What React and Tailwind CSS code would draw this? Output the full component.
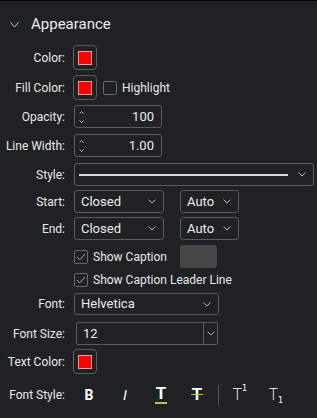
import React from 'react';

const font = { fontFamily: 'Roboto, "Noto Sans", sans-serif' };

function Chevron({ className = '' }) {
  return (
    <svg className={className} width="8" height="5" viewBox="0 0 8 5" fill="none">
      <path d="M0.5 0.5L4 4L7.5 0.5" stroke="#bdbdbd" strokeWidth="1" />
    </svg>
  );
}

function Label({ children }) {
  return <div className="w-[66px] shrink-0 text-right text-[12px] text-[#e8e8e8] pr-[1px]">{children}</div>;
}

function Swatch() {
  return (
    <div className="ml-[7px] w-[24px] h-[25px] rounded-[4px] border border-[#5b5b5b] flex items-center justify-center">
      <div className="w-[14px] h-[14px] bg-[#ff0000] border border-[#ff9a9a]" />
    </div>
  );
}

function Check({ checked }) {
  return (
    <div className="w-[14px] h-[14px] rounded-[2px] border border-[#6a6a6a] flex items-center justify-center">
      {checked && (
        <svg width="10" height="8" viewBox="0 0 10 8" fill="none">
          <path d="M1 4L3.8 6.8L9 1" stroke="#a8a8a8" strokeWidth="1" />
        </svg>
      )}
    </div>
  );
}

function NumberInput({ value }) {
  return (
    <div className="ml-[8px] w-[88px] h-full rounded-[3px] border border-[#5b5b5b] flex items-center pl-[4px] pr-[7px]">
      <div className="flex flex-col gap-[6px]">
        <svg width="5" height="3" viewBox="0 0 5 3" fill="none">
          <path d="M0.5 2.5L2.5 0.5L4.5 2.5" stroke="#bdbdbd" strokeWidth="1" />
        </svg>
        <svg width="5" height="3" viewBox="0 0 5 3" fill="none">
          <path d="M0.5 0.5L2.5 2.5L4.5 0.5" stroke="#bdbdbd" strokeWidth="1" />
        </svg>
      </div>
      <div className="flex-1 text-right text-[13px] text-[#ececec]">{value}</div>
    </div>
  );
}

function Select({ value, className = '' }) {
  return (
    <div className={`h-full rounded-[3px] border border-[#5b5b5b] flex items-center pl-[6px] pr-[7px] ${className}`}>
      <div className="flex-1 text-[13px] text-[#ececec]">{value}</div>
      <Chevron />
    </div>
  );
}

export default function App() {
  return (
    <div className="w-[317px] h-[418px] bg-[#202124] border-t border-black overflow-hidden select-none" style={font}>
      <div className="h-[44px] flex items-center pl-[10px] pt-[3px]">
        <svg width="9" height="6" viewBox="0 0 9 6" fill="none">
          <path d="M0.5 0.5L4.5 5L8.5 0.5" stroke="#c8c8c8" strokeWidth="1" />
        </svg>
        <span className="ml-[12px] text-[15px] text-[#ececec]">Appearance</span>
      </div>

      <div className="h-[25px] flex items-center">
        <Label>Color:</Label>
        <Swatch />
      </div>

      <div className="mt-[5px] h-[25px] flex items-center">
        <Label>Fill Color:</Label>
        <Swatch />
        <div className="ml-[6px]"><Check /></div>
        <span className="ml-[5px] text-[12px] text-[#e8e8e8]">Highlight</span>
      </div>

      <div className="mt-[5px] h-[23px] flex items-center">
        <Label>Opacity:</Label>
        <NumberInput value="100" />
      </div>

      <div className="mt-[6px] h-[23px] flex items-center">
        <Label>Line Width:</Label>
        <NumberInput value="1.00" />
      </div>

      <div className="mt-[6px] h-[23px] flex items-center">
        <Label>Style:</Label>
        <div className="ml-[8px] w-[240px] h-full rounded-[3px] border border-[#5b5b5b] flex items-center pl-[4px] pr-[7px]">
          <div className="flex-1 h-[2px] bg-[#d8d8d8] mr-[10px]" />
          <Chevron />
        </div>
      </div>

      <div className="mt-[4px] h-[23px] flex items-center">
        <Label>Start:</Label>
        <Select value="Closed" className="ml-[8px] w-[90px]" />
        <Select value="Auto" className="ml-[16px] w-[59px]" />
      </div>

      <div className="mt-[4px] h-[23px] flex items-center">
        <Label>End:</Label>
        <Select value="Closed" className="ml-[8px] w-[90px]" />
        <Select value="Auto" className="ml-[16px] w-[59px]" />
      </div>

      <div className="mt-[5px] h-[23px] flex items-center pl-[74px]">
        <Check checked />
        <span className="ml-[5px] w-[87px] text-[12px] text-[#e8e8e8]">Show Caption</span>
        <div className="w-[37px] h-full rounded-[3px] bg-[#464646]" />
      </div>

      <div className="mt-[3px] h-[18px] flex items-center pl-[74px]">
        <Check checked />
        <span className="ml-[5px] text-[12px] text-[#e8e8e8]">Show Caption Leader Line</span>
      </div>

      <div className="mt-[4px] h-[22px] flex items-center">
        <Label>Font:</Label>
        <Select value="Helvetica" className="ml-[8px] w-[145px]" />
      </div>

      <div className="mt-[7px] h-[23px] flex items-center">
        <Label>Font Size:</Label>
        <div className="ml-[10px] w-[142px] h-full border border-[#5b5b5b] rounded-[2px] flex items-stretch">
          <div className="flex-1 flex items-center pl-[6px] text-[13px] text-[#ececec]">12</div>
          <div className="w-[14px] border-l border-[#5b5b5b] flex items-center justify-center">
            <Chevron />
          </div>
        </div>
      </div>

      <div className="mt-[4px] h-[25px] flex items-center">
        <Label>Text Color:</Label>
        <Swatch />
      </div>

      <div className="mt-[10px] h-[22px] flex items-center">
        <Label>Font Style:</Label>
        <div className="ml-[5px] w-[36px] flex justify-center text-[14px] font-bold text-white" style={{ fontFamily: 'Roboto, sans-serif' }}>B</div>
        <div className="w-[36px] flex justify-center text-[14px] italic text-white" style={{ fontFamily: '"Liberation Sans", sans-serif' }}>I</div>
        <div className="w-[36px] flex justify-center">
          <span className="text-[17px] leading-[16px] font-bold text-white border-b-2 border-[#b8c94a] px-[1px]" style={{ fontFamily: '"Liberation Sans", sans-serif' }}>T</span>
        </div>
        <div className="w-[36px] flex justify-center">
          <span className="relative text-[17px] leading-[16px] font-bold text-white" style={{ fontFamily: '"Liberation Sans", sans-serif' }}>
            T
            <span className="absolute left-[-1px] right-[-1px] top-[7px] h-[1px] bg-[#b8c94a]" />
          </span>
        </div>
        <div className="ml-[3px] w-[1px] h-[20px] bg-[#555555]" />
        <div className="ml-[3px] w-[36px] flex justify-center items-start text-white" style={{ fontFamily: '"DejaVu Sans", sans-serif' }}>
          <span className="text-[15px] leading-[16px] font-extralight">T</span>
          <span className="text-[8px] leading-[8px] -mt-[2px]">1</span>
        </div>
        <div className="w-[36px] flex justify-center items-end text-white" style={{ fontFamily: '"DejaVu Sans", sans-serif' }}>
          <span className="text-[15px] leading-[16px] font-extralight">T</span>
          <span className="text-[8px] leading-[8px] -mb-[2px]">1</span>
        </div>
      </div>
    </div>
  );
}
